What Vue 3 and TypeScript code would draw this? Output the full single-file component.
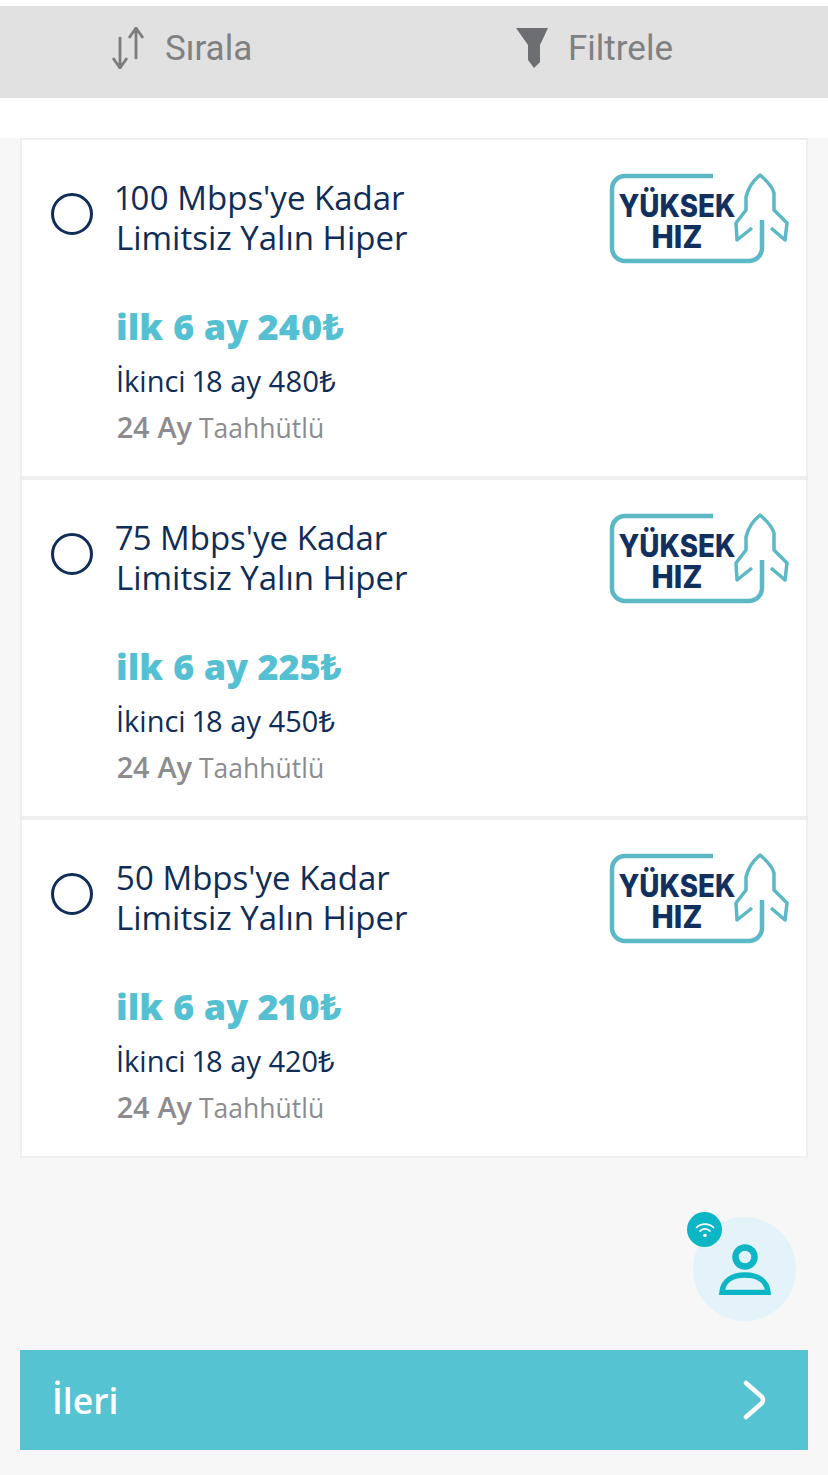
<script setup lang="ts">
interface Plan {
  speed: string
  first: string
  second: string
}

const plans: Plan[] = [
  { speed: '100', first: '240', second: '480' },
  { speed: '75', first: '225', second: '450' },
  { speed: '50', first: '210', second: '420' },
]
</script>

<template>
  <div class="page">
    <div class="toolbar">
      <div class="tool tool--sort">
        <svg class="sort-icon" viewBox="0 0 36 42" fill="none" stroke="#7b7c7e" stroke-width="2.8">
          <path d="M9 10V41M2 31L9 41L16 31" stroke-linejoin="round" />
          <path d="M25 32V1M18 11L25 1L32 11" stroke-linejoin="round" />
        </svg>
        <span>Sırala</span>
      </div>
      <div class="tool tool--filter">
        <svg class="filter-icon" viewBox="0 0 34 42">
          <path d="M1 1H33L25 18V35L19 41L13 33V18Z" fill="#6d6e71" />
        </svg>
        <span>Filtrele</span>
      </div>
    </div>

    <div class="gap"></div>

    <div class="plans">
      <div v-for="plan in plans" :key="plan.speed" class="plan">
        <div class="plan-head">
          <span class="radio"></span>
          <div class="plan-title">
            {{ plan.speed }} Mbps'ye Kadar<br />Limitsiz Yalın Hiper
          </div>
          <svg class="badge" viewBox="0 0 180 92">
            <path d="M104 4H16A13 13 0 0 0 3 17V76A13 13 0 0 0 16 89H140A13 13 0 0 0 153 76V48" fill="none" stroke="#5bb8c4" stroke-width="4.500" />
            <path d="M143 56L128 68L127 51L137 38V25C139 16 145 8 151 3C157 8 163 14 165 21V38L178 51L176 68L162 56" fill="none" stroke="#5bb8c4" stroke-width="3.500" stroke-linejoin="round" />
            <text class="badge-text" x="68" y="45" text-anchor="middle" textLength="117" lengthAdjust="spacingAndGlyphs">YÜKSEK</text>
            <text class="badge-text" x="68" y="76" text-anchor="middle" textLength="51" lengthAdjust="spacingAndGlyphs">HIZ</text>
          </svg>
        </div>
        <div class="price">ilk 6 ay {{ plan.first }}₺</div>
        <div class="second">İkinci 18 ay {{ plan.second }}₺</div>
        <div class="term"><b>24 Ay</b> Taahhütlü</div>
      </div>
    </div>

    <div class="assist-row">
      <div class="assist">
        <svg class="assist-user" viewBox="0 0 52 52" fill="none" stroke="#0cb6c4">
          <circle cx="26" cy="14" r="9.500" stroke-width="6.500" />
          <path d="M3 49.500C4 38 13 32 26 32S48 38 49 49.500Z" stroke-width="5.500" />
        </svg>
        <span class="assist-badge">
          <svg viewBox="0 0 20 18" fill="none" stroke="#fff" stroke-width="1.700" stroke-linecap="round">
            <path d="M1.500 6.500C6 2 14 2 18.500 6.500" />
            <path d="M5 10C8 7.500 12 7.500 15 10" />
            <circle cx="10" cy="14.500" r="1.800" fill="#fff" stroke="none" />
          </svg>
        </span>
      </div>
    </div>

    <button class="next">
      <span>İleri</span>
      <svg class="next-icon" viewBox="0 0 24 40" fill="none" stroke="#fff" stroke-width="4.500" stroke-linecap="round" stroke-linejoin="round">
        <path d="M3 3L19 17Q21 20 19 23L3 37" />
      </svg>
    </button>
  </div>
</template>

<style scoped>
.page {
  width: 828px;
  height: 1475px;
  overflow: hidden;
  background: #f7f7f7;
  font-family: "Open Sans", "Noto Sans", sans-serif;
  font-variant-numeric: proportional-nums;
}

.toolbar {
  display: flex;
  height: 92px;
  background: #e1e1e1;
  border-top: 6px solid #fff;
  color: #7f8082;
  font-family: Roboto, sans-serif;
  font-size: 35px;
}

.tool {
  display: flex;
  align-items: center;
  height: 84px;
}

.tool--sort {
  padding-left: 111px;
  width: 404px;
}

.sort-icon {
  width: 36px;
  height: 42px;
  margin-right: 18px;
}

.filter-icon {
  width: 34px;
  height: 42px;
  margin-right: 19px;
}

.gap {
  height: 40px;
  background: #fff;
}

.plans {
  margin: 0 20px;
  border: 2px solid #eee;
}

.plan {
  height: 340px;
  background: #fff;
  padding-left: 29px;
  box-sizing: border-box;
  border-bottom: 4px solid #eee;
}

.plan:last-child {
  height: 336px;
  border-bottom: 0;
}

.plan-head {
  display: flex;
  align-items: flex-start;
  padding-top: 38px;
  height: 160px;
  box-sizing: border-box;
}

.radio {
  flex: none;
  width: 42px;
  height: 42px;
  margin-top: 15px;
  border: 3px solid #0f2d57;
  border-radius: 50%;
  box-sizing: border-box;
}

.plan-title {
  flex: 1;
  margin-left: 23px;
  color: #0f2d57;
  font-size: 33px;
  line-height: 40px;
}

.badge {
  flex: none;
  width: 180px;
  height: 92px;
  margin-top: -6px;
  margin-right: 17px;
}

.badge-text {
  fill: #12305f;
  font-family: Inter, sans-serif;
  font-weight: 800;
  font-size: 31px;
}

.price {
  margin-left: 65px;
  margin-top: 5px;
  color: #55c0d1;
  font-size: 36px;
  font-weight: 800;
  line-height: 44px;
}

.second {
  margin-left: 65px;
  margin-top: 14px;
  color: #0f2d57;
  font-size: 29px;
  line-height: 36px;
}

.term {
  margin-left: 66px;
  margin-top: 11px;
  color: #8c8c8e;
  font-size: 26.500px;
  line-height: 34px;
}

.term b {
  font-size: 29px;
  font-weight: 600;
}

.assist-row {
  display: flex;
  justify-content: flex-end;
  padding: 59px 32px 0 0;
  height: 192px;
  box-sizing: border-box;
}

.assist {
  position: relative;
  display: flex;
  align-items: center;
  justify-content: center;
  width: 103px;
  height: 104px;
  border-radius: 50%;
  background: #e4f3f9;
}

.assist-user {
  width: 52px;
  height: 52px;
}

.assist-badge {
  position: absolute;
  left: -6px;
  top: -5px;
  display: flex;
  align-items: center;
  justify-content: center;
  width: 35px;
  height: 35px;
  border-radius: 50%;
  background: #0cb6c4;
}

.assist-badge svg {
  width: 20px;
  height: 18px;
}

.next {
  display: flex;
  align-items: center;
  justify-content: space-between;
  width: 788px;
  height: 100px;
  margin: 0 20px;
  padding: 0 41px 0 32px;
  border: 0;
  background: #55c3d1;
  color: #fff;
  font-family: "Open Sans", sans-serif;
  font-size: 35.500px;
  font-weight: 600;
}

.next-icon {
  width: 24px;
  height: 40px;
}
</style>
